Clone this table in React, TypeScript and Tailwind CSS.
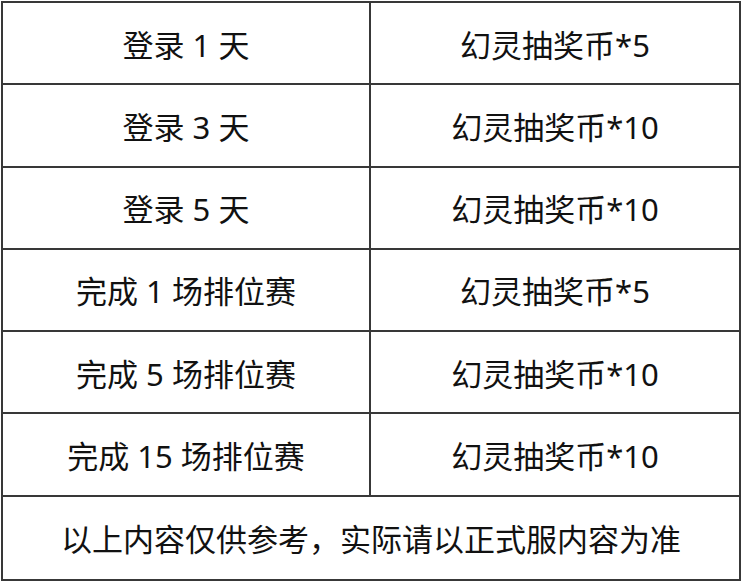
const rows: [string, string][] = [
  ["登录 1 天", "幻灵抽奖币*5"],
  ["登录 3 天", "幻灵抽奖币*10"],
  ["登录 5 天", "幻灵抽奖币*10"],
  ["完成 1 场排位赛", "幻灵抽奖币*5"],
  ["完成 5 场排位赛", "幻灵抽奖币*10"],
  ["完成 15 场排位赛", "幻灵抽奖币*10"],
];

export default function App() {
  return (
    <div className="w-[750px] h-[586px] bg-white pt-px pl-px">
      <div
        className="w-[740px] h-[580px] border-2 border-[#383838] grid grid-rows-7 text-[31px] text-[#111] leading-none"
        style={{ fontFamily: '"Noto Sans", "Noto Sans CJK SC", sans-serif' }}
      >
        {rows.map(([task, reward]) => (
          <div key={task} className="grid grid-cols-2 border-b-2 border-[#383838]">
            <div className="flex items-center justify-center border-r-2 border-[#383838] pt-1">
              {task}
            </div>
            <div className="flex items-center justify-center pt-1">{reward}</div>
          </div>
        ))}
        <div className="flex items-center justify-center pt-1">
          以上内容仅供参考，实际请以正式服内容为准
        </div>
      </div>
    </div>
  );
}
